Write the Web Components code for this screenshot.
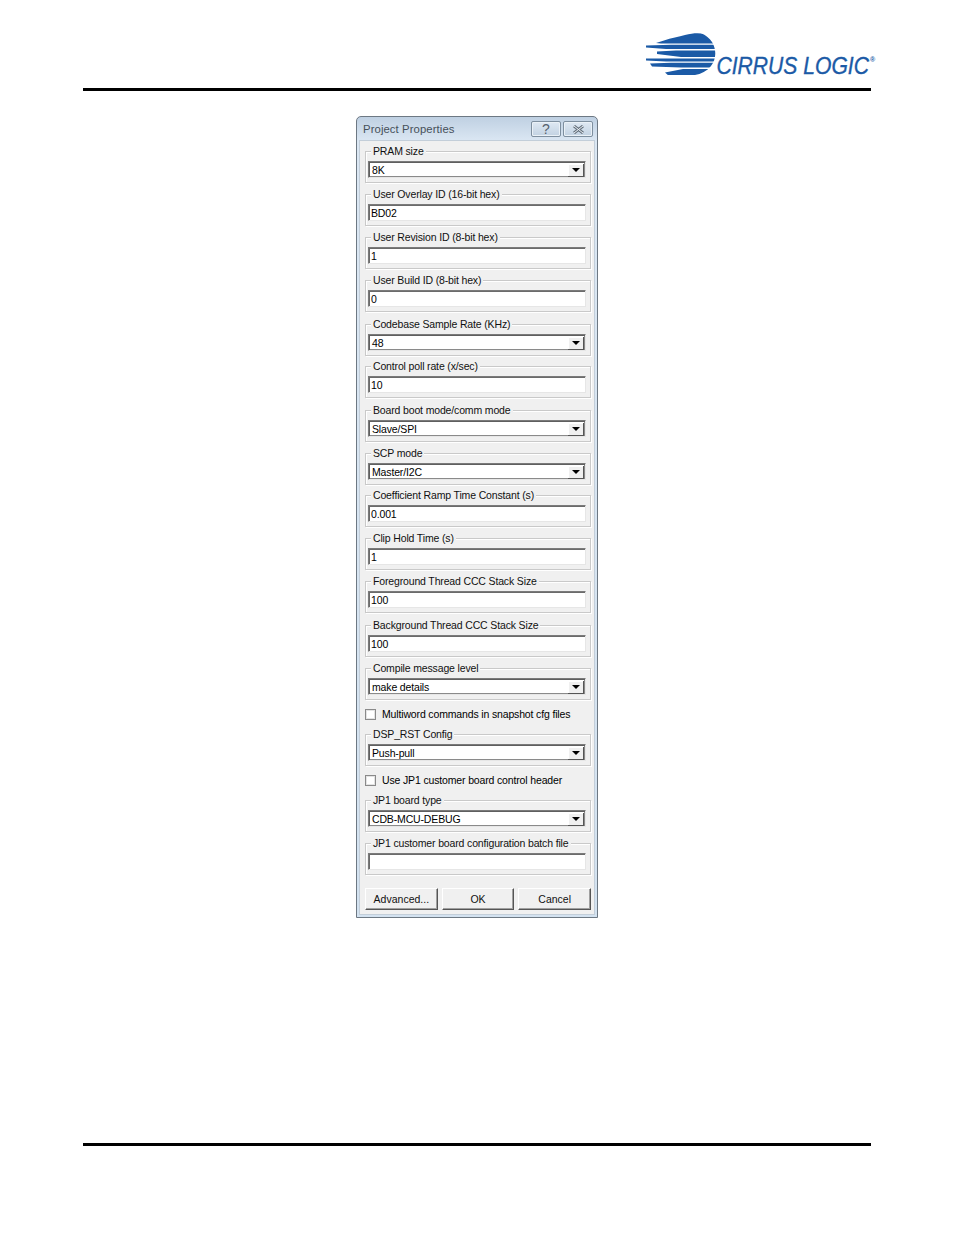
<!DOCTYPE html>
<html>
<head>
<meta charset="utf-8">
<title>Project Properties</title>
<style>
  html, body { margin: 0; background: #fff; }
  body { width: 954px; height: 1235px; display: flex; flex-direction: column; font-family: "Liberation Sans", Arial, sans-serif; }
  cl-dialog { margin: 25px 0 0 356px; }
  cl-rule { margin: 225px 83px 0; }
</style>
</head>
<body>
<cl-header></cl-header>
<cl-dialog title="Project Properties">
  <cl-group label="PRAM size"><cl-combo value="8K"></cl-combo></cl-group>
  <cl-group label="User Overlay ID (16-bit hex)" style="margin-top:11px"><cl-field value="BD02"></cl-field></cl-group>
  <cl-group label="User Revision ID (8-bit hex)" style="margin-top:11px"><cl-field value="1"></cl-field></cl-group>
  <cl-group label="User Build ID (8-bit hex)" style="margin-top:11px"><cl-field value="0"></cl-field></cl-group>
  <cl-group label="Codebase Sample Rate (KHz)" style="margin-top:12px"><cl-combo value="48"></cl-combo></cl-group>
  <cl-group label="Control poll rate (x/sec)" style="margin-top:10px"><cl-field value="10"></cl-field></cl-group>
  <cl-group label="Board boot mode/comm mode" style="margin-top:12px"><cl-combo value="Slave/SPI"></cl-combo></cl-group>
  <cl-group label="SCP mode" style="margin-top:11px"><cl-combo value="Master/I2C"></cl-combo></cl-group>
  <cl-group label="Coefficient Ramp Time Constant (s)" style="margin-top:10px"><cl-field value="0.001"></cl-field></cl-group>
  <cl-group label="Clip Hold Time (s)" style="margin-top:11px"><cl-field value="1"></cl-field></cl-group>
  <cl-group label="Foreground Thread CCC Stack Size" style="margin-top:11px"><cl-field value="100"></cl-field></cl-group>
  <cl-group label="Background Thread CCC Stack Size" style="margin-top:12px"><cl-field value="100"></cl-field></cl-group>
  <cl-group label="Compile message level" style="margin-top:11px"><cl-combo value="make details"></cl-combo></cl-group>
  <cl-check label="Multiword commands in snapshot cfg files" style="margin-top:8px"></cl-check>
  <cl-group label="DSP_RST Config" style="margin-top:13px"><cl-combo value="Push-pull"></cl-combo></cl-group>
  <cl-check label="Use JP1 customer board control header" style="margin-top:8px"></cl-check>
  <cl-group label="JP1 board type" style="margin-top:13px"><cl-combo value="CDB-MCU-DEBUG"></cl-combo></cl-group>
  <cl-group label="JP1 customer board configuration batch file" style="margin-top:11px"><cl-field value=""></cl-field></cl-group>
  <div slot="actions" style="display:flex;gap:4px">
    <cl-button label="Advanced..."></cl-button>
    <cl-button label="OK"></cl-button>
    <cl-button label="Cancel"></cl-button>
  </div>
</cl-dialog>
<cl-rule></cl-rule>

<script>
class ClHeader extends HTMLElement {
  constructor() {
    super();
    this.attachShadow({ mode: 'open' }).innerHTML = `
      <style>
        :host { display: block; height: 91px; box-sizing: border-box; padding: 0 83px; }
        .wrap { height: 88px; border-bottom: 3px solid #000; display: flex; justify-content: flex-end; }
        svg { display: block; width: 240px; height: 88px; margin-right: -5px; }
        text { font-family: "Liberation Sans", sans-serif; fill: #1b5aa6; }
      </style>
      <div class="wrap">
        <svg viewBox="635 0 240 88">
          <defs>
            <clipPath id="disc"><path d="M640 30H690C696 31 706 34 711 42C716 50 715 60 710 66C706 71 700 74 694 75H640Z"/></clipPath>
          </defs>
          <g clip-path="url(#disc)" fill="#1b5aa6">
            <path d="M655 43L663 40.5C670 38 678 36.5 684 35C692 33 698 33 704 34L716 43.5H660Z"/>
            <path d="M645 45.5L670 44.8H716V49H665L645 47.5Z"/>
            <path d="M656 51.5L675 50.5H716V57H680L668 55.5L656 54Z"/>
            <path d="M645 58.5H716V61.5H665L645 60.5Z"/>
            <path d="M649 63.5L670 62.8H716V67.5H680L651 66.5Z"/>
            <path d="M664 72.5L682 69H716V76H668Z"/>
          </g>
          <text transform="translate(715.5 73.5) scale(.88 1)" font-size="24" font-style="italic" stroke="#1b5aa6" stroke-width=".35">CIRRUS LOGIC</text>
          <text x="869" y="62" font-size="7" font-weight="bold">®</text>
        </svg>
      </div>`;
  }
}

class ClRule extends HTMLElement {
  constructor() {
    super();
    this.attachShadow({ mode: 'open' }).innerHTML = `
      <style>:host { display: block; height: 3px; background: #000; }</style>`;
  }
}

class ClDialog extends HTMLElement {
  constructor() {
    super();
    this.attachShadow({ mode: 'open' }).innerHTML = `
      <style>
        :host {
          display: flex; flex-direction: column; width: 242px; height: 802px; box-sizing: border-box;
          border: 1px solid #6d7883; border-radius: 5px 5px 0 0;
          background: linear-gradient(#bfd0e2, #dbe7f3 24px, #d3e2f0);
          padding: 0 2px 2px;
          font: 10.5px/13px "Liberation Sans", Arial, sans-serif; letter-spacing: -.15px; color: #000;
        }
        .bar { height: 23px; display: flex; align-items: center; justify-content: space-between; padding: 1px 2px 0 4px; box-sizing: border-box; flex: none; }
        .title { color: #46505a; font-size: 11.3px; letter-spacing: .1px; }
        .btns { display: flex; gap: 2px; }
        .cap { width: 30px; height: 16px; box-sizing: border-box; border: 1px solid #7e8f9f; border-radius: 2px; background: linear-gradient(#dfe9f3, #c2d2e2); box-shadow: inset 0 0 0 1px #eaf1f7; display: flex; align-items: center; justify-content: center; color: #56616c; }
        .cap svg { display: block; }
        .client { flex: 1; background: #f0f0f0; border: 1px solid #c3ced9; padding: 10px 3px 0 5px; display: flex; flex-direction: column; }
        .actions { margin-top: auto; margin-bottom: 4px; }
      </style>
      <div class="bar">
        <span class="title">${this.getAttribute('title')}</span>
        <div class="btns">
          <div class="cap"><span style="font-size:14px;line-height:14px;letter-spacing:0">?</span></div>
          <div class="cap">
            <svg width="13" height="9" viewBox="0 0 13 9">
              <path d="M2 1L11 8M11 1L2 8" fill="none" stroke="#66727e" stroke-width="3"/>
              <path d="M2 1L11 8M11 1L2 8" fill="none" stroke="#eef3f8" stroke-width="1"/>
            </svg>
          </div>
        </div>
      </div>
      <div class="client">
        <slot></slot>
        <div class="actions"><slot name="actions"></slot></div>
      </div>`;
  }
}

class ClGroup extends HTMLElement {
  constructor() {
    super();
    this.attachShadow({ mode: 'open' }).innerHTML = `
      <style>
        :host { display: block; position: relative; height: 32px; box-sizing: border-box; border: 1px solid #c9c9c9; box-shadow: 1px 1px 0 #fff, inset 1px 1px 0 #fff; padding: 9px 4px 0 2px; }
        .label { position: absolute; left: 5px; top: -7px; padding: 0 2px; background: #f0f0f0; white-space: nowrap; line-height: 13px; color: #111; }
      </style>
      <span class="label">${this.getAttribute('label')}</span>
      <slot></slot>`;
  }
}

const SUNKEN = `
  border-top: 1px solid #7a7a7a; border-left: 1px solid #7a7a7a;
  border-right: 1px solid #e6e6e6; border-bottom: 1px solid #e6e6e6;
`;

class ClCombo extends HTMLElement {
  constructor() {
    super();
    this.attachShadow({ mode: 'open' }).innerHTML = `
      <style>
        :host { display: block; height: 17px; box-sizing: border-box; ${SUNKEN} box-shadow: inset 1px 1px 0 #5f5f5f, inset -1px -1px 0 #8a8a8a; background: #fff; position: relative; padding: 1px 2px 0 3px; line-height: 14px; }
        .arrow { position: absolute; right: 1px; top: 2px; width: 15px; height: 12px; background: #f0f0f0; border-right: 1px solid #555; border-bottom: 1px solid #555; box-shadow: inset 1px 1px 0 #fff; display: flex; align-items: center; justify-content: center; }
        .arrow::after { content: ""; border: 4px solid transparent; border-top: 4px solid #000; border-bottom: 0; }
      </style>
      <span>${this.getAttribute('value')}</span>
      <div class="arrow"></div>`;
  }
}

class ClField extends HTMLElement {
  constructor() {
    super();
    this.attachShadow({ mode: 'open' }).innerHTML = `
      <style>
        :host { display: block; height: 17px; box-sizing: border-box; ${SUNKEN} box-shadow: inset 1px 1px 0 #6b6b6b; background: #fff; padding: 1px 2px 0 2px; line-height: 14px; }
      </style>
      <span>${this.getAttribute('value')}</span>`;
  }
}

class ClCheck extends HTMLElement {
  constructor() {
    super();
    this.attachShadow({ mode: 'open' }).innerHTML = `
      <style>
        :host { display: flex; align-items: center; gap: 6px; height: 13px; white-space: nowrap; }
        .box { width: 11px; height: 11px; box-sizing: border-box; flex: none; background: #fff; border: 1px solid #8a8a8a; box-shadow: inset 0 0 0 1px #e4e4e4; }
      </style>
      <div class="box"></div>
      <span>${this.getAttribute('label')}</span>`;
  }
}

class ClButton extends HTMLElement {
  constructor() {
    super();
    this.attachShadow({ mode: 'open' }).innerHTML = `
      <style>
        :host { display: flex; align-items: center; justify-content: center; width: 73px; height: 22px; box-sizing: border-box; background: #f0f0f0; border: 1px solid; border-color: #fff #555 #555 #fff; box-shadow: inset -1px -1px 0 #a0a0a0; color: #111; letter-spacing: 0; }
      </style>
      <span>${this.getAttribute('label')}</span>`;
  }
}

customElements.define('cl-header', ClHeader);
customElements.define('cl-rule', ClRule);
customElements.define('cl-dialog', ClDialog);
customElements.define('cl-group', ClGroup);
customElements.define('cl-combo', ClCombo);
customElements.define('cl-field', ClField);
customElements.define('cl-check', ClCheck);
customElements.define('cl-button', ClButton);
</script>
</body>
</html>
